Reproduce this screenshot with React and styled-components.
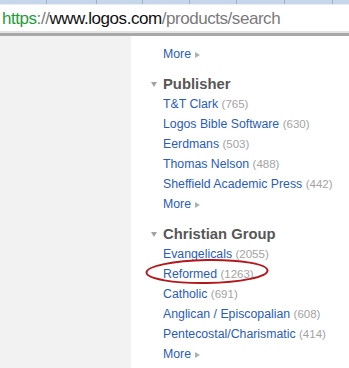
import React from "react";
import styled, { createGlobalStyle } from "styled-components";

const GlobalStyle = createGlobalStyle`
  html, body {
    margin: 0;
    padding: 0;
    background: #fff;
    overflow: hidden;
  }
  body {
    font-family: "Liberation Sans", Arial, sans-serif;
  }
`;

const Window = styled.div`
  width: 349px;
  height: 368px;
  display: flex;
  flex-direction: column;
  overflow: hidden;
`;

// browser chrome
const TabStrip = styled.div`
  flex: none;
  height: 4px;
  background: #c6d7ec;
  display: flex;
`;
const TabEdge = styled.div`
  width: ${(p) => p.w}px;
  flex: none;
  border-right: 1px solid #9fb3cc;
  box-sizing: border-box;
`;
const AddressBar = styled.div`
  flex: none;
  height: 27px;
  border-top: 1px solid #e9eef4;
  background: #fff;
  display: flex;
  align-items: center;
  padding: 2px 0 0 2px;
  box-sizing: border-box;
  font-size: 17px;
  letter-spacing: -0.45px;
  white-space: nowrap;
`;
const UrlPart = styled.span`
  color: ${(p) => p.color};
`;
const ChromeBottom = styled.div`
  flex: none;
  height: 2px;
  background: #e4e4e4;
  border-bottom: 3px solid #a8a8a8;
`;

// page body
const Page = styled.div`
  flex: none;
  display: flex;
`;
const Sidebar = styled.div`
  width: 131px;
  flex: none;
  background: #f2f2f2;
`;
const Facets = styled.div`
  padding: 8px 0 0 32px;
  font-size: 12.3px;
`;
const Section = styled.div`
  margin-bottom: 10px;
`;
const Heading = styled.div`
  display: flex;
  align-items: center;
  margin-left: -13px;
  height: 20px;
  font-size: 14.8px;
  font-weight: bold;
  color: #575757;
`;
const DownArrow = styled.span`
  width: 13px;
  flex: none;
  display: flex;
  align-items: center;
  &::before {
    content: "";
    margin-left: 1px;
    border-left: 3px solid transparent;
    border-right: 3px solid transparent;
    border-top: 5px solid #a3a3a3;
  }
`;
const Row = styled.div`
  position: relative;
  height: 20px;
  line-height: 20px;
  white-space: nowrap;
`;
const Link = styled.span`
  color: #2a5cb6;
`;
const Count = styled.span`
  color: #a3a3a3;
  font-size: 11.5px;
`;
const MoreArrow = styled.span`
  display: inline-block;
  margin-left: 4px;
  vertical-align: middle;
  border-top: 3px solid transparent;
  border-bottom: 3px solid transparent;
  border-left: 5px solid #b0b0b0;
`;
const Circle = styled.svg`
  position: absolute;
  left: -18px;
  top: -6px;
  overflow: visible;
`;

const sections = [
  {
    title: "Publisher",
    items: [
      ["T&T Clark", 765],
      ["Logos Bible Software", 630],
      ["Eerdmans", 503],
      ["Thomas Nelson", 488],
      ["Sheffield Academic Press", 442],
    ],
  },
  {
    title: "Christian Group",
    items: [
      ["Evangelicals", 2055],
      ["Reformed", 1263, true],
      ["Catholic", 691],
      ["Anglican / Episcopalian", 608],
      ["Pentecostal/Charismatic", 414],
    ],
  },
];

const More = () => (
  <Row>
    <Link>More</Link>
    <MoreArrow />
  </Row>
);

const tabs = [47, 50, 46, 47, 47, 48, 48];

export default function App() {
  return (
    <Window>
      <GlobalStyle />
      <TabStrip>
        {tabs.map((w, i) => (
          <TabEdge key={i} w={w} />
        ))}
      </TabStrip>
      <AddressBar>
        <UrlPart color="#1f9b3a">https</UrlPart>
        <UrlPart color="#7a7a7a">://</UrlPart>
        <UrlPart color="#111">www.logos.com</UrlPart>
        <UrlPart color="#7a7a7a">/products/search</UrlPart>
      </AddressBar>
      <ChromeBottom />
      <Page>
        <Sidebar />
        <Facets>
          <Section>
            <More />
          </Section>
          {sections.map((s) => (
            <Section key={s.title}>
              <Heading>
                <DownArrow />
                {s.title}
              </Heading>
              {s.items.map(([name, n, marked]) => (
                <Row key={name}>
                  {marked && (
                    <Circle width="124" height="27" viewBox="0 0 124 27">
                      <ellipse
                        cx="62"
                        cy="13.5"
                        rx="60.5"
                        ry="11.5"
                        fill="none"
                        stroke="#b3181d"
                        strokeWidth="2"
                        transform="rotate(-1 62 13.5)"
                      />
                    </Circle>
                  )}
                  <Link>{name}</Link> <Count>({n})</Count>
                </Row>
              ))}
              <More />
            </Section>
          ))}
        </Facets>
      </Page>
    </Window>
  );
}
